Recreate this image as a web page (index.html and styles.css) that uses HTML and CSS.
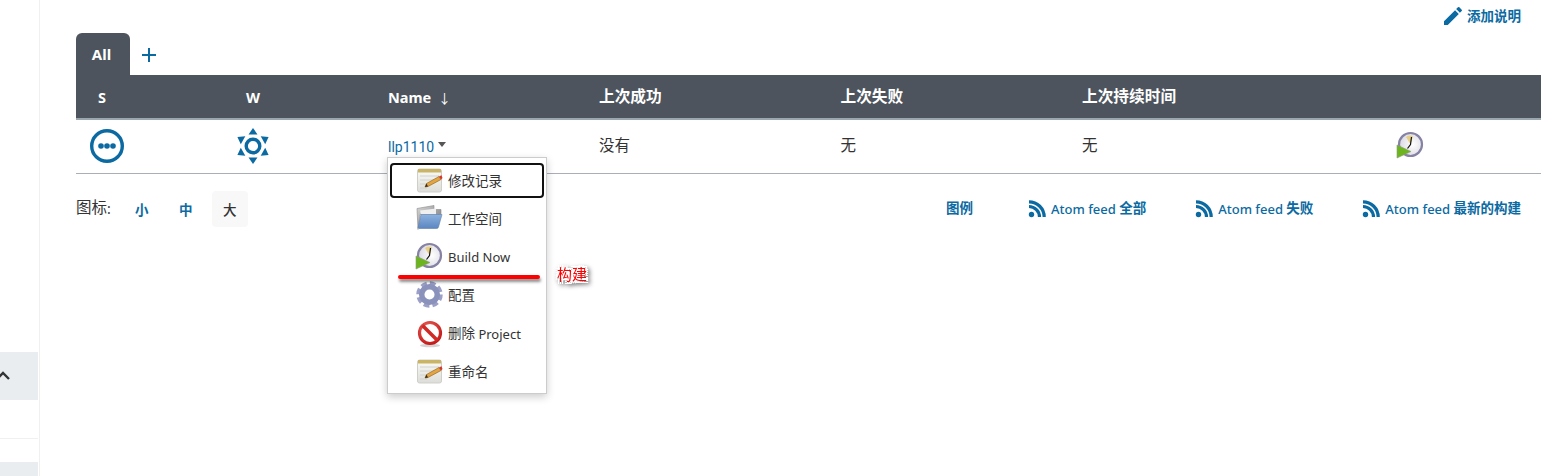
FILE: index.html
```html
<!DOCTYPE html>
<html lang="zh">
<head>
    <meta charset="UTF-8">
    <meta name="viewport" content="width=device-width, initial-scale=1.0">
    <title>Jenkins</title>
    <link rel="stylesheet" href="styles.css">
</head>

<body>
    <svg class="sprite" width="0" height="0">
        <defs>
            <linearGradient id="paper" x1="0" y1="0" x2="0" y2="1">
                <stop offset="0" stop-color="#fbfbf8"/>
                <stop offset="1" stop-color="#dcdcd8"/>
            </linearGradient>
            <linearGradient id="folderBlue" x1="0" y1="0" x2="0" y2="1">
                <stop offset="0" stop-color="#8db2e0"/>
                <stop offset="1" stop-color="#5a86c0"/>
            </linearGradient>
            <linearGradient id="folderGrey" x1="0" y1="0" x2="1" y2="1">
                <stop offset="0" stop-color="#d8d8d8"/>
                <stop offset="1" stop-color="#6f6f6f"/>
            </linearGradient>
            <radialGradient id="face" cx="0.6" cy="0.5" r="0.6">
                <stop offset="0" stop-color="#ffffff"/>
                <stop offset="1" stop-color="#d9d8e2"/>
            </radialGradient>
            <radialGradient id="redRing" cx="0.4" cy="0.3" r="0.8">
                <stop offset="0" stop-color="#ef6a62"/>
                <stop offset="1" stop-color="#c01616"/>
            </radialGradient>
            <symbol id="i-notepad" viewBox="0 0 32 32">
                <rect x="2.500" y="4" width="24" height="23" rx="2" fill="url(#paper)" stroke="#cfcfca"/>
                <rect x="3" y="4" width="23" height="3.500" fill="#c9b565"/>
                <path d="M5 11h19M5 15h15M5 19h9M5 23h7" stroke="#d2d2ce" stroke-width="1"/>
                <path d="M10 22l1.500-3.500L24 11.500l2 3L13 21.500z" fill="#e3a53f" stroke="#8a5a1a" stroke-width=".6"/>
                <path d="M10 22l1.500-3.500 1.500 3z" fill="#3a2a1a"/>
                <path d="M24 11.500l2.500-1.200 1 2.700-1.500 1.500z" fill="#d8362a"/>
            </symbol>
            <symbol id="i-folder" viewBox="0 0 32 32">
                <g transform="translate(-2 -2.500)">
                    <path d="M4 8l17-3v4h7v5H7l-2 15z" fill="url(#folderGrey)" stroke="#8a8a8a" stroke-width=".6"/>
                    <path d="M7 10l16-2v6H8z" fill="#efefef"/>
                    <path d="M8 14h21l-3.500 12.500a2 2 0 0 1-2 1.500H6l-1-1z" fill="url(#folderBlue)" stroke="#5f7fa8" stroke-width=".6"/>
                </g>
            </symbol>
            <symbol id="i-clock" viewBox="0 0 32 32">
                <circle cx="14.500" cy="14.500" r="11.500" fill="url(#face)" stroke="#8682a4" stroke-width="2.200"/>
                <path d="M14.500 14.500L10 7a8.500 8.500 0 0 1 7-1z" fill="#e8cf86"/>
                <path d="M15.500 7l-1 7.500-3 4" fill="none" stroke="#111" stroke-width="1.200"/>
                <path d="M1 15l14 6.500L1 28z" fill="#6cb51e" stroke="#8d9c7a" stroke-width=".6"/>
            </symbol>
            <symbol id="i-gear" viewBox="0 0 32 32">
                <circle cx="14.500" cy="15.500" r="11" fill="none" stroke="#9aa0c6" stroke-width="4.500" stroke-dasharray="5.600 3.040"/>
                <circle cx="14.500" cy="15.500" r="7.800" fill="none" stroke="#8a92bc" stroke-width="5.500"/>
                <circle cx="14.500" cy="15.500" r="4" fill="#fff"/>
            </symbol>
            <symbol id="i-stop" viewBox="0 0 32 32">
                <ellipse cx="15" cy="27.500" rx="10" ry="1.800" fill="#d4d4d4"/>
                <circle cx="15" cy="15" r="10.500" fill="#fff" stroke="url(#redRing)" stroke-width="3.200"/>
                <path d="M7.500 7.500l15 15" stroke="#d02a26" stroke-width="3.600"/>
            </symbol>
            <symbol id="i-rss" viewBox="0 0 18 18">
                <circle cx="3.500" cy="14.500" r="2.700" fill="currentColor"/>
                <path d="M1 6.500a10.500 10.500 0 0 1 10.500 10.500M1 1.800A15.200 15.200 0 0 1 16.200 17" fill="none" stroke="currentColor" stroke-width="3.200"/>
            </symbol>
        </defs>
    </svg>

    <aside class="sidebar">
        <div class="side-block">
            <svg class="chevron" width="10" height="8" viewBox="0 0 10 8"><path d="M-3 8l7-7 6 6" fill="none" stroke="#333" stroke-width="2.400"/></svg>
        </div>
        <div class="side-line"></div>
        <div class="side-block side-block-next"></div>
    </aside>

    <main class="main">
        <div class="top-actions">
            <a href="#" class="link edit-link">
                <svg width="24" height="24" viewBox="0 0 24 24"><path fill="currentColor" d="M3 17.250V21h3.750L17.810 9.940l-3.750-3.750L3 17.250zM20.710 7.040a1 1 0 0 0 0-1.410l-2.340-2.340a1 1 0 0 0-1.410 0l-1.830 1.830 3.750 3.750 1.830-1.830z"/></svg>
                <span class="cjk">添加说明</span>
            </a>
        </div>

        <div class="tabs">
            <a href="#" class="tab">All</a>
            <a href="#" class="tab-add">
                <svg width="14" height="14" viewBox="0 0 14 14"><path d="M7 0v14M0 7h14" stroke="currentColor" stroke-width="2"/></svg>
            </a>
        </div>

        <table class="jobs">
            <colgroup>
                <col class="col-s">
                <col class="col-w">
                <col class="col-name">
                <col class="col-time">
                <col class="col-time">
                <col class="col-last">
                <col>
            </colgroup>
            <thead>
                <tr>
                    <th class="center">S</th>
                    <th class="center">W</th>
                    <th>Name <span class="sort-arrow">↓</span></th>
                    <th><span class="cjk">上次成功</span></th>
                    <th><span class="cjk">上次失败</span></th>
                    <th><span class="cjk">上次持续时间</span></th>
                    <th></th>
                </tr>
            </thead>
            <tbody>
                <tr>
                    <td class="center">
                        <svg class="status-icon" width="34" height="34" viewBox="0 0 34 34">
                            <circle cx="17" cy="17" r="15.300" fill="none" stroke="#0b6aa2" stroke-width="3.400"/>
                            <circle cx="11" cy="17" r="2.800" fill="#0b6aa2"/>
                            <circle cx="17" cy="17" r="2.800" fill="#0b6aa2"/>
                            <circle cx="23" cy="17" r="2.800" fill="#0b6aa2"/>
                        </svg>
                    </td>
                    <td class="center">
                        <svg class="weather-icon" width="36" height="36" viewBox="-18 -18 36 36">
                            <circle r="6.800" fill="none" stroke="#0b6aa2" stroke-width="3.400"/>
                            <g fill="#0b6aa2">
                                <polygon points="0,-18 -4.500,-11.500 4.500,-11.500"/>
                                <polygon points="0,-18 -4.500,-11.500 4.500,-11.500" transform="rotate(60)"/>
                                <polygon points="0,-18 -4.500,-11.500 4.500,-11.500" transform="rotate(120)"/>
                                <polygon points="0,-18 -4.500,-11.500 4.500,-11.500" transform="rotate(180)"/>
                                <polygon points="0,-18 -4.500,-11.500 4.500,-11.500" transform="rotate(240)"/>
                                <polygon points="0,-18 -4.500,-11.500 4.500,-11.500" transform="rotate(300)"/>
                            </g>
                        </svg>
                    </td>
                    <td class="job-cell">
                        <a href="#" class="job-link">llp1110</a><span class="caret"></span>
                        <div class="job-menu">
                            <a href="#" class="menu-item focused"><svg class="menu-icon"><use href="#i-notepad"/></svg><span class="cjk">修改记录</span></a>
                            <a href="#" class="menu-item"><svg class="menu-icon"><use href="#i-folder"/></svg><span class="cjk">工作空间</span></a>
                            <a href="#" class="menu-item"><svg class="menu-icon"><use href="#i-clock"/></svg>Build Now</a>
                            <a href="#" class="menu-item"><svg class="menu-icon"><use href="#i-gear"/></svg><span class="cjk">配置</span></a>
                            <a href="#" class="menu-item"><svg class="menu-icon"><use href="#i-stop"/></svg><span><span class="cjk">删除</span> Project</span></a>
                            <a href="#" class="menu-item"><svg class="menu-icon"><use href="#i-notepad"/></svg><span class="cjk">重命名</span></a>
                        </div>
                    </td>
                    <td><span class="cjk">没有</span></td>
                    <td><span class="cjk">无</span></td>
                    <td><span class="cjk">无</span></td>
                    <td class="build-cell"><svg class="build-icon"><use href="#i-clock"/></svg></td>
                </tr>
            </tbody>
        </table>

        <div class="footer-row">
            <div class="icon-sizes">
                <span class="sizes-label"><span class="cjk">图标</span>:</span>
                <a href="#" class="size-btn">小</a>
                <a href="#" class="size-btn">中</a>
                <a href="#" class="size-btn current">大</a>
            </div>
            <div class="feeds">
                <a href="#" class="link legend-link"><span class="cjk">图例</span></a>
                <a href="#" class="link feed-link"><svg class="rss"><use href="#i-rss"/></svg><span>Atom feed <span class="cjk">全部</span></span></a>
                <a href="#" class="link feed-link"><svg class="rss"><use href="#i-rss"/></svg><span>Atom feed <span class="cjk">失败</span></span></a>
                <a href="#" class="link feed-link"><svg class="rss"><use href="#i-rss"/></svg><span>Atom feed <span class="cjk">最新的构建</span></span></a>
            </div>
        </div>
    </main>

    <!-- red marks drawn on top of the screenshot -->
    <div class="mark-line"></div>
    <div class="mark-text">构建</div>
</body>
</html>
```

FILE: styles.css
```css
body {
    font-family: "Noto Sans", "Noto Sans CJK SC", sans-serif;
    font-size: 14px;
    color: #333;
    background-color: #fff;
    margin: 0;
    height: 476px;
    overflow: hidden;
    display: flex;
}

a {
    text-decoration: none;
}

/* CJK glyphs sit a bit low against the latin baseline */
.cjk {
    line-height: 0;
    vertical-align: 1.500px;
}

.sprite {
    position: absolute;
}

.sidebar {
    width: 39px;
    flex: none;
    border-right: 1px solid #f0f0f0;
    padding-top: 352px;
}

.side-block {
    width: 38px;
    height: 48px;
    background-color: #e9edf0;
    display: flex;
    align-items: center;
    overflow: hidden;
}

.chevron {
    margin-left: -1px;
    overflow: visible;
}

.side-line {
    width: 38px;
    height: 1px;
    background-color: #eef1f3;
    margin: 38px 0 23px;
}

.side-block-next {
    height: 14px;
}

.main {
    flex: 1;
    min-width: 0;
    padding: 0 22px 0 36px;
}

.link {
    color: #0b6aa2;
    font-size: 13px;
    font-weight: 500;
}

.link .cjk {
    font-size: 13.500px;
    font-weight: 700;
}

.top-actions {
    height: 33px;
    display: flex;
    justify-content: flex-end;
    padding-right: 20px;
}

.edit-link {
    display: flex;
    align-items: center;
    height: 32px;
    gap: 2px;
}

.tabs {
    display: flex;
    height: 42px;
}

.tab {
    width: 54px;
    padding-right: 3px;
    box-sizing: border-box;
    background-color: #4d545d;
    color: #fff;
    font-weight: 700;
    font-size: 15px;
    border-radius: 6px 6px 0 0;
    display: flex;
    align-items: center;
    justify-content: center;
}

.tab-add {
    color: #0b6aa2;
    margin-left: 12px;
    display: flex;
    align-items: center;
    padding-top: 1px;
}

.jobs {
    width: 100%;
    table-layout: fixed;
    border-collapse: collapse;
}

.col-s {
    width: 52px;
}

.col-w {
    width: 250px;
}

.col-name {
    width: 211px;
}

.col-time {
    width: 241.500px;
}

.col-last {
    width: 301px;
}

.jobs th {
    height: 44px;
    padding: 0 0 0 10px;
    box-sizing: border-box;
    background-color: #4d545d;
    border-bottom: 2px solid #9ba7af;
    color: #fff;
    font-size: 14.500px;
    font-weight: 700;
    text-align: left;
}

.jobs th .cjk {
    font-size: 15.700px;
}

.jobs td {
    height: 54px;
    padding: 0 0 0 10px;
    box-sizing: border-box;
    border-bottom: 1px solid #a9afb4;
    color: #333;
}

.jobs td > .cjk {
    font-size: 15.500px;
}

.jobs th.center,
.jobs td.center {
    padding-left: 0;
    text-align: center;
}

.sort-arrow {
    font-weight: 400;
    font-size: 13px;
    margin-left: 3px;
}

.status-icon {
    display: block;
    margin-left: 14px;
}

.weather-icon {
    display: block;
    margin: 0 auto;
}

.job-cell {
    position: relative;
}

.job-link {
    color: #0b6aa2;
    font-family: Roboto, sans-serif;
    font-size: 14px;
}

.caret {
    display: inline-block;
    width: 0;
    height: 0;
    border: 4.500px solid transparent;
    border-top: 5px solid #555;
    border-bottom: 0;
    margin-left: 4px;
    vertical-align: 5px;
}

.job-menu {
    position: absolute;
    left: 9px;
    top: 37px;
    width: 160px;
    height: 237px;
    box-sizing: border-box;
    padding: 3.300px 2px;
    background-color: #fff;
    border: 1px solid #ccc;
    box-shadow: 0 3px 8px rgba(0, 0, 0, 0.2);
    z-index: 10;
}

.menu-item {
    display: flex;
    align-items: center;
    height: 38.300px;
    padding-left: 23px;
    box-sizing: border-box;
    color: #333;
    font-size: 13px;
    border: 2px solid transparent;
    border-radius: 4px;
}

.menu-item .cjk {
    font-size: 13.500px;
}

.menu-item.focused {
    height: 35px;
    margin: 2px 0 1.300px;
    border-color: #111;
}

.menu-icon {
    width: 32px;
    height: 32px;
    margin-right: 1px;
    flex: none;
}

.jobs td.build-cell {
    padding-left: 0;
}

.build-icon {
    display: block;
    width: 32px;
    height: 32px;
    margin-left: 23px;
}

.footer-row {
    display: flex;
    justify-content: space-between;
    align-items: center;
    margin-top: 17px;
    height: 36px;
    padding-right: 20px;
}

.icon-sizes {
    display: flex;
    align-items: center;
}

.sizes-label {
    margin-right: 13px;
}

.sizes-label .cjk {
    font-size: 15.500px;
}

.size-btn {
    width: 36px;
    height: 36px;
    margin-right: 8px;
    border-radius: 4px;
    color: #0b6aa2;
    font-size: 13.500px;
    font-weight: 700;
    display: flex;
    align-items: center;
    justify-content: center;
}

.size-btn.current {
    background-color: #f8f8f8;
    color: #333;
    font-weight: 500;
}

.feeds {
    display: flex;
    align-items: center;
    gap: 49px;
}

.legend-link {
    margin-right: 6px;
}

.feed-link {
    display: flex;
    align-items: center;
    gap: 5px;
}

.rss {
    width: 18px;
    height: 18px;
    color: #0b6aa2;
}

.mark-line {
    position: absolute;
    left: 398px;
    top: 275px;
    width: 142px;
    height: 4px;
    background-color: #f00;
    border-radius: 2px;
    box-shadow: 1px 3px 3px rgba(0, 0, 0, 0.45);
    z-index: 20;
}

.mark-text {
    position: absolute;
    left: 557px;
    top: 263px;
    color: #f00;
    font-size: 15px;
    line-height: 22px;
    text-shadow: 2px 0 0 #fff, -2px 0 0 #fff, 0 2px 0 #fff, 0 -2px 0 #fff, 2px 2px 0 #fff, -2px -2px 0 #fff, 2px -2px 0 #fff, -2px 2px 0 #fff;
    filter: drop-shadow(2px 2px 2px rgba(0, 0, 0, 0.5));
    z-index: 20;
}
```
